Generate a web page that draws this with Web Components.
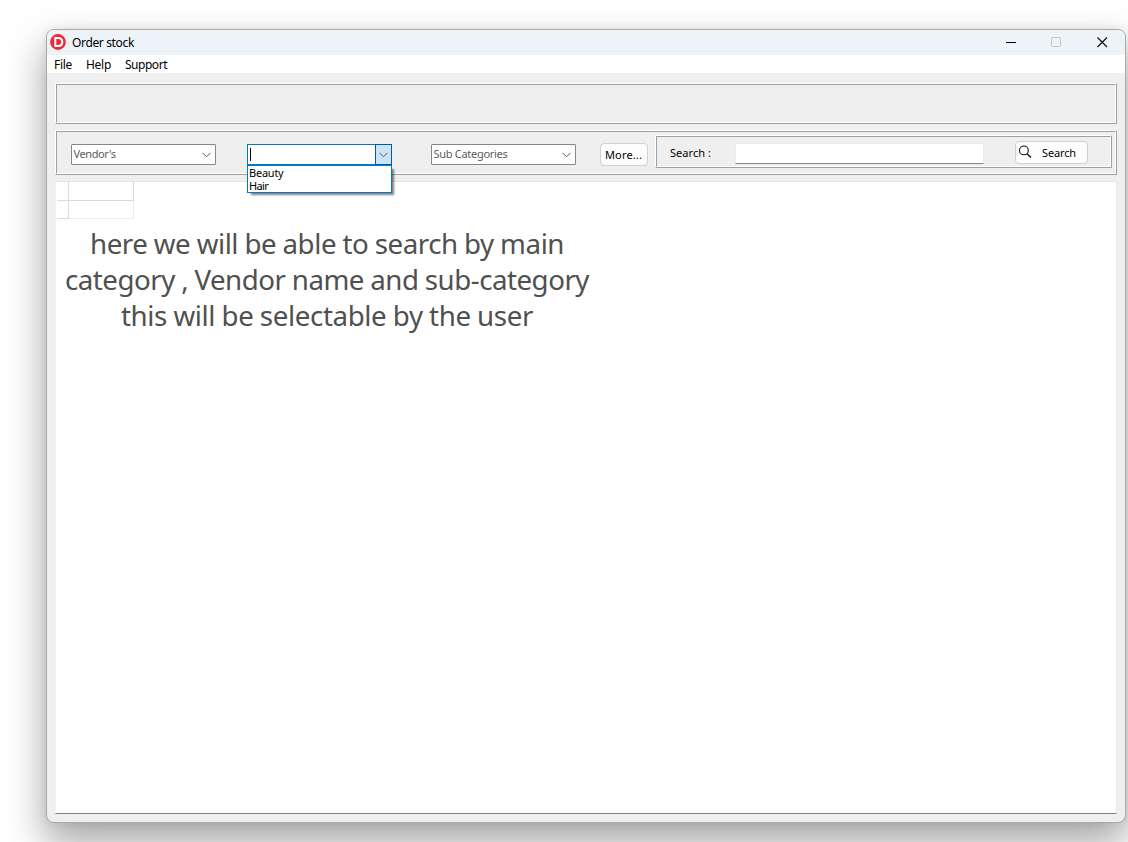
<!DOCTYPE html>
<html lang="en"><head><meta charset="utf-8"><title>Order stock</title>
<style>html,body{margin:0;height:100%;overflow:hidden;background:#fff}</style></head>
<body><order-window></order-window>
<script>
const define=(name,html,ready)=>customElements.define(name,class extends HTMLElement{
  constructor(){super();const t=document.createElement('template');t.innerHTML=html;
    this.attachShadow({mode:'open'}).append(t.content.cloneNode(true));}
  connectedCallback(){if(ready)ready(this,this.shadowRoot);}
});

/* A line of text tracked to a given width. */
define('fit-text',`<style>:host{display:block;white-space:pre;flex:none}span{display:inline-block}</style><span><slot></slot></span>`,(el,r)=>{
  const s=r.querySelector('span'),w=+el.getAttribute('w'),n=el.textContent.length;
  s.style.letterSpacing=((w-s.getBoundingClientRect().width)/n)+'px';
});

define('etched-frame',`<style>
:host{display:block;box-sizing:border-box;border:1px solid;border-color:#fff #a0a0a0 #a0a0a0 #fff}
div{box-sizing:border-box;height:100%;border:1px solid;border-color:#a0a0a0 #fff #fff #a0a0a0;display:flex;align-items:flex-start}
</style><div><slot></slot></div>`);

define('combo-box',`<style>
:host{display:block;position:relative;width:145px;height:21px;color:#5c5c5c}
.box{box-sizing:border-box;width:145px;height:21px;border:1px solid #868686;border-radius:1px;background:#fff;display:flex;justify-content:space-between}
.val{padding:1px 0 0 1.5px;line-height:15px}
.arrow{box-sizing:border-box;width:17px;height:19px;padding:7px 0 0 4px}
svg{display:block}
:host([open]) .box{border-color:#0078c8;border-radius:0}
:host([open]) .arrow{background:#cce4f7;border:1px solid #005a9e;margin:-1px;height:21px;width:17px;padding-left:3px}
:host([open]) .val{padding:2px 0 0 1px}
.caret{display:none;width:1px;height:13px;background:#000;margin:1px 0 0 1px}
:host([open]) .caret{display:block}
.list{display:none}
:host([open]) .list{display:block;position:absolute;left:0;top:21px;box-sizing:border-box;width:145px;height:28px;border:1px solid #0078d0;background:#fff;color:#000;box-shadow:3px 3px 2px -1px rgba(0,0,0,.5);padding-left:1px;line-height:13px;z-index:2}
</style><div class="box"><div class="val"><slot></slot><div class="caret"></div></div><div class="arrow"><svg width="9" height="6" viewBox="0 0 9 6"><path d="M.5.8l4 4 4-4" fill="none" stroke="#555"/></svg></div></div><div class="list"><slot name="items"></slot></div>`);

define('push-button',`<style>
:host{display:flex;box-sizing:border-box;border:1px solid #d0d0d0;border-radius:4px;background:#fdfdfd;color:#000}
</style><slot></slot>`);

define('title-bar',`<style>
:host{display:flex;height:25px;background:#eef3f8;font-size:12px;line-height:25px;flex:none}
.logo{margin:4px 6px 0 3px;flex:none}fit-text{flex:1}
.min{margin:7px 34px 0 0}.max{margin:7px 35px 0 0}.close{margin:7px 17px 0 0}
svg{display:block;flex:none}
</style><svg class="logo" width="16" height="16" viewBox="0 0 16 16"><circle cx="8" cy="8" r="7.9" fill="#f0283c"/><path d="M5.3 4h2.8c2.8 0 4.2 1.6 4.2 4s-1.4 4-4.2 4H5.3z" fill="none" stroke="#fff" stroke-width="2"/></svg>
<fit-text w="62">Order stock</fit-text>
<svg class="min" width="11" height="11"><path d="M0 5.5h10" stroke="#000"/></svg>
<svg class="max" width="11" height="11"><rect x=".5" y=".5" width="9" height="9" rx="1" fill="none" stroke="#c0c4c8"/></svg>
<svg class="close" width="11" height="11"><path d="M.5 0.5l9.5 9.5m0-9.5l-9.5 9.5" stroke="#111" stroke-width="1.2"/></svg>`);

define('menu-bar',`<style>:host{display:flex;gap:14px;height:18px;background:#fff;padding-left:7px;font-size:12px;line-height:19px;flex:none}</style>
<fit-text w="18">File</fit-text><fit-text w="25">Help</fit-text><fit-text w="42">Support</fit-text>`);

define('filter-bar',`<style>
:host{display:block}
etched-frame.outer{height:45px}
.v{margin:12px 0 0 14px}.c{margin:12px 0 0 31px}.s{margin:12px 0 0 39px}
.more{width:48px;height:23px;margin:11px 0 0 24px;padding:2px 0 0 4px;line-height:17px}
.search{width:457px;height:33px;margin:3px 0 0 7px}
.lab{margin:7px 0 0 13px;line-height:17px}
.input{box-sizing:border-box;width:249px;height:21px;margin:6px 0 0 24px;background:#fff;border:1px solid #eaeaea;border-bottom-color:#868686}
.go{width:73px;height:23px;margin:4px 0 0 31px;padding:2px 0 0 2px;line-height:18px}
.go svg{margin:1px 10px 0 0}
</style><etched-frame class="outer">
<combo-box class="v"><fit-text w="42">Vendor's</fit-text></combo-box>
<combo-box class="c" open><div slot="items"><fit-text w="34.5">Beauty</fit-text><fit-text w="19">Hair</fit-text></div></combo-box>
<combo-box class="s"><fit-text w="74">Sub Categories</fit-text></combo-box>
<push-button class="more"><fit-text w="37">More...</fit-text></push-button>
<etched-frame class="search"><fit-text class="lab" w="41">Search :</fit-text><div class="input"></div>
<push-button class="go"><svg width="14" height="14" viewBox="0 0 14 14"><circle cx="5.9" cy="5.4" r="4.4" fill="none" stroke="#111" stroke-width="1.1"/><path d="M9 8.7l4 3.9" stroke="#111" stroke-width="1.4"/></svg><fit-text w="34">Search</fit-text></push-button>
</etched-frame></etched-frame>`);

define('stock-grid',`<style>
:host{display:block;box-sizing:border-box;height:633px;margin:6px 8px 0;background:#fff;border:1px solid #e6e6e6;border-left-color:#f2f2f2;border-bottom-color:#808080}
.cells{display:grid;grid-template-columns:12px 65px;grid-template-rows:19px 18px;width:77px;margin-left:1px}
.cells i{border:solid #dadada;border-width:0 1px 1px 0}
.cells i:last-child{border-color:#ececec}
.note{margin-top:6px;width:542px;display:flex;flex-direction:column;align-items:center;font-size:27.7px;line-height:36px;color:#505050;word-spacing:-.4px}
</style><div class="cells"><i></i><i></i><i></i><i></i></div>
<div class="note"><fit-text w="474">here we will be able to search by main</fit-text><fit-text w="524">category , Vendor name and sub-category</fit-text><fit-text w="412">this will be selectable by the user</fit-text></div>`);

define('order-window',`<style>
:host{display:block;box-sizing:border-box;height:842px;padding:29px 0 0 46px;font-family:"Noto Sans","Open Sans",sans-serif;font-size:11px;color:#000}
.win{box-sizing:border-box;width:1080px;height:794px;border:1px solid #aaa;border-radius:8px;background:#efefef;box-shadow:0 19px 38px 2px rgba(0,0,0,.34),0 0 9px rgba(0,0,0,.08);display:flex;flex-direction:column}
title-bar{border-radius:7px 7px 0 0}
.info{height:41px;margin:10px 8px 6px}
filter-bar{margin:0 8px}
</style><div class="win"><title-bar></title-bar><menu-bar></menu-bar><etched-frame class="info"></etched-frame><filter-bar></filter-bar><stock-grid></stock-grid></div>`);
</script></body></html>
